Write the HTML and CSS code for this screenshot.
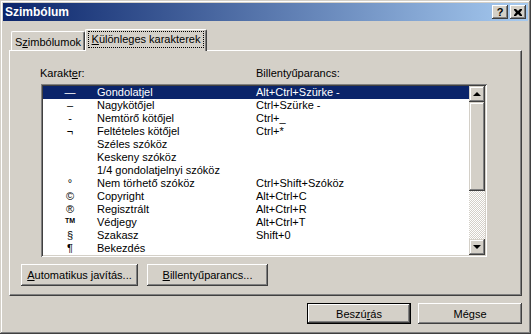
FILE: index.html
```html
<!DOCTYPE html>
<html lang="hu">
<head>
    <meta charset="UTF-8">
    <title>Szimbólum</title>
    <link rel="stylesheet" href="styles.css">
</head>
<body>

<div class="window">
    <div class="titlebar">
        <span class="title">Szimbólum</span>
        <div class="caption-buttons">
            <div class="cap-btn help">?</div>
            <div class="cap-btn">
                <svg width="8" height="7" viewBox="0 0 8 7"><path d="M0 0h2l2 2 2-2h2v1l-2 2.5 2 2.5v1h-2l-2-2-2 2h-2v-1l2-2.5-2-2.5z" fill="#000"/></svg>
            </div>
        </div>
    </div>

    <div class="body">
        <div class="tabs">
            <div class="tab">S<u>z</u>imbólumok</div>
            <div class="tab active"><span class="focus"><u>K</u>ülönleges karakterek</span></div>
        </div>

        <div class="panel">
            <div class="list-head">
                <span>Karakt<u>e</u>r:</span>
                <span>Billentyűparancs:</span>
            </div>

            <div class="listbox">
                <div class="rows">
                    <div class="row selected"><span class="sym">—</span><span class="name">Gondolatjel</span><span>Alt+Ctrl+Szürke -</span></div>
                    <div class="row"><span class="sym">–</span><span class="name">Nagykötőjel</span><span>Ctrl+Szürke -</span></div>
                    <div class="row"><span class="sym">-</span><span class="name">Nemtörő kötőjel</span><span>Ctrl+_</span></div>
                    <div class="row"><span class="sym">¬</span><span class="name">Feltételes kötőjel</span><span>Ctrl+*</span></div>
                    <div class="row"><span class="sym"></span><span class="name">Széles szóköz</span><span></span></div>
                    <div class="row"><span class="sym"></span><span class="name">Keskeny szóköz</span><span></span></div>
                    <div class="row"><span class="sym"></span><span class="name">1/4 gondolatjelnyi szóköz</span><span></span></div>
                    <div class="row"><span class="sym">°</span><span class="name">Nem törhető szóköz</span><span>Ctrl+Shift+Szóköz</span></div>
                    <div class="row"><span class="sym">©</span><span class="name">Copyright</span><span>Alt+Ctrl+C</span></div>
                    <div class="row"><span class="sym">®</span><span class="name">Regisztrált</span><span>Alt+Ctrl+R</span></div>
                    <div class="row"><span class="sym tm">TM</span><span class="name">Védjegy</span><span>Alt+Ctrl+T</span></div>
                    <div class="row"><span class="sym">§</span><span class="name">Szakasz</span><span>Shift+0</span></div>
                    <div class="row"><span class="sym">¶</span><span class="name">Bekezdés</span><span></span></div>
                </div>
                <div class="scrollbar">
                    <div class="sb-btn"><span class="arrow-up"></span></div>
                    <div class="sb-thumb"></div>
                    <div class="sb-track"></div>
                    <div class="sb-btn"><span class="arrow-down"></span></div>
                </div>
            </div>

            <div class="panel-buttons">
                <div class="btn auto"><u>A</u>utomatikus javítás...</div>
                <div class="btn keys"><u>B</u>illentyűparancs...</div>
            </div>
        </div>

        <div class="footer">
            <div class="btn wide default">Beszú<u>r</u>ás</div>
            <div class="btn wide">Mégse</div>
        </div>
    </div>
</div>

</body>
</html>
```

FILE: styles.css
```css
body {
    margin: 0;
    font-family: "Liberation Sans", Arial, sans-serif;
    font-size: 11px;
    color: #000;
}

.window {
    width: 531px;
    height: 334px;
    box-sizing: border-box;
    padding: 3px;
    background: #d4d0c8;
    box-shadow: inset -1px -1px #404040, inset 1px 1px #d4d0c8, inset -2px -2px #808080, inset 2px 2px #fff;
}

/* Title bar */
.titlebar {
    height: 18px;
    display: flex;
    align-items: center;
    justify-content: space-between;
    padding: 0 2px 0 2px;
    background: linear-gradient(to right, #0a246a, #a6caf0);
    color: #fff;
    font-weight: bold;
    font-size: 12px;
}

.caption-buttons {
    display: flex;
    gap: 2px;
}

.cap-btn {
    width: 16px;
    height: 14px;
    box-sizing: border-box;
    display: flex;
    align-items: center;
    justify-content: center;
    background: #d4d0c8;
    color: #000;
    font-weight: bold;
    font-size: 11px;
    box-shadow: inset -1px -1px #404040, inset 1px 1px #fff, inset -2px -2px #808080;
}

/* Tabs */
.body {
    padding: 8px 6px 0 6px;
}

.tabs {
    display: flex;
    align-items: flex-end;
    height: 21px;
    padding-left: 2px;
}

.tab {
    box-sizing: border-box;
    height: 19px;
    width: 74px;
    display: flex;
    align-items: center;
    justify-content: center;
    padding-top: 1px;
    border-top: 1px solid #fff;
    border-left: 1px solid #fff;
    border-right: 1px solid #404040;
    border-radius: 2px 2px 0 0;
    box-shadow: inset -1px 0 #808080;
}

.tab.active {
    position: relative;
    z-index: 1;
    width: 122px;
    height: 22px;
    margin-bottom: -1px;
    padding-top: 0;
    padding-bottom: 2px;
    background: #d4d0c8;
}

.focus {
    outline: 1px dotted #000;
    outline-offset: 1px;
    padding: 0 2px;
    line-height: 13px;
}

/* Panel */
.panel {
    box-sizing: border-box;
    height: 246px;
    border-top: 1px solid #fff;
    border-left: 1px solid #fff;
    border-right: 1px solid #404040;
    border-bottom: 1px solid #404040;
    box-shadow: inset -1px -1px #808080;
    padding: 16px 0 0 30px;
}

.list-head {
    display: grid;
    grid-template-columns: 216px auto;
    line-height: 13px;
}

.listbox {
    margin: 4px 0 0 1px;
    width: 446px;
    height: 173px;
    box-sizing: border-box;
    padding: 2px;
    display: flex;
    background: #fff;
    box-shadow: inset 1px 1px #808080, inset -1px -1px #fff, inset 2px 2px #404040, inset -2px -2px #d4d0c8;
}

.rows {
    flex: 1;
}

.row {
    display: flex;
    height: 13px;
    line-height: 13px;
    white-space: nowrap;
}

.row.selected {
    background: #0a246a;
    color: #fff;
}

.sym {
    width: 54px;
    text-align: center;
}

.sym.tm {
    font-size: 7px;
    font-weight: bold;
    line-height: 10px;
}

.name {
    width: 159px;
}

/* Scrollbar */
.scrollbar {
    width: 16px;
    display: flex;
    flex-direction: column;
}

.sb-btn, .sb-thumb {
    box-sizing: border-box;
    background: #d4d0c8;
    box-shadow: inset -1px -1px #404040, inset 1px 1px #d4d0c8, inset -2px -2px #808080, inset 2px 2px #fff;
}

.sb-btn {
    height: 16px;
    display: flex;
    align-items: center;
    justify-content: center;
}

.sb-thumb {
    height: 89px;
}

.sb-track {
    flex: 1;
    background: repeating-conic-gradient(#d4d0c8 0 25%, #fff 0 50%) 0 0 / 2px 2px;
}

.arrow-up, .arrow-down {
    width: 0;
    height: 0;
    border-left: 4px solid transparent;
    border-right: 4px solid transparent;
}

.arrow-up {
    border-bottom: 4px solid #000;
    margin-top: -1px;
}

.arrow-down {
    border-top: 4px solid #000;
}

/* Buttons */
.panel-buttons {
    display: flex;
    gap: 9px;
    margin: 7px 0 0 -19px;
}

.btn {
    box-sizing: border-box;
    height: 22px;
    display: flex;
    align-items: center;
    justify-content: center;
    background: #d4d0c8;
    box-shadow: inset -1px -1px #404040, inset 1px 1px #fff, inset -2px -2px #808080, inset 2px 2px #d4d0c8;
}

.btn.auto {
    width: 117px;
}

.btn.keys {
    width: 121px;
}

.footer {
    display: flex;
    justify-content: flex-end;
    gap: 7px;
    margin-top: 7px;
}

.btn.wide {
    width: 104px;
    height: 21px;
}

.btn.default {
    border: 1px solid #000;
}
```
